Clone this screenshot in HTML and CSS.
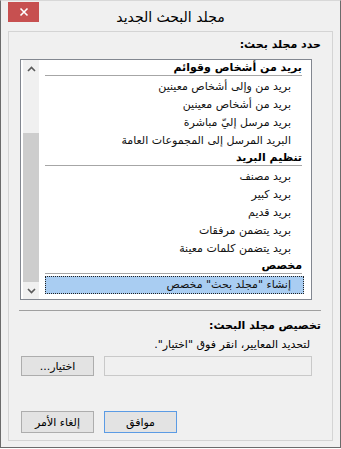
FILE: index.html
```html
<!DOCTYPE html>
<html lang="ar" dir="rtl">
<head>
    <meta charset="UTF-8">
    <meta name="viewport" content="width=device-width, initial-scale=1.0">
    <title>مجلد البحث الجديد</title>
    <link rel="stylesheet" href="styles.css">
</head>
<body>
    <div class="window">
        <div class="titlebar">
            <span></span>
            <div class="title">مجلد البحث الجديد</div>
            <button class="close" aria-label="إغلاق">
                <svg width="10" height="10" viewBox="0 0 10 10">
                    <path d="M1.5 1.5 L8.5 8.5 M8.5 1.5 L1.5 8.5" stroke="#fff" stroke-width="1.6" fill="none"/>
                </svg>
            </button>
        </div>

        <div class="panel">
            <div class="label label-top">حدد مجلد بحث:</div>

            <div class="listbox">
                <div class="list">
                    <div class="group">بريد من أشخاص وقوائم</div>
                    <div class="item">بريد من وإلى أشخاص معينين</div>
                    <div class="item">بريد من أشخاص معينين</div>
                    <div class="item">بريد مرسل إليّ مباشرة</div>
                    <div class="item">البريد المرسل إلى المجموعات العامة</div>
                    <div class="group">تنظيم البريد</div>
                    <div class="item">بريد مصنف</div>
                    <div class="item">بريد كبير</div>
                    <div class="item">بريد قديم</div>
                    <div class="item">بريد يتضمن مرفقات</div>
                    <div class="item">بريد يتضمن كلمات معينة</div>
                    <div class="group">مخصص</div>
                    <div class="item selected">إنشاء "مجلد بحث" مخصص</div>
                </div>
                <div class="scrollbar">
                    <div class="arrow">
                        <svg width="9" height="6" viewBox="0 0 9 6">
                            <polyline points="1,5 4.5,1.5 8,5" stroke="#5a5a5a" stroke-width="1.6" fill="none"/>
                        </svg>
                    </div>
                    <div class="track"><div class="thumb"></div></div>
                    <div class="arrow">
                        <svg width="9" height="6" viewBox="0 0 9 6">
                            <polyline points="1,1 4.5,4.5 8,1" stroke="#5a5a5a" stroke-width="1.6" fill="none"/>
                        </svg>
                    </div>
                </div>
            </div>

            <div class="sep"></div>

            <div class="label">تخصيص مجلد البحث:</div>
            <div class="hint">لتحديد المعايير، انقر فوق "اختيار".</div>

            <div class="field-row">
                <div class="field"></div>
                <button class="btn btn-small">اختيار...</button>
            </div>

            <div class="actions">
                <button class="btn default">موافق</button>
                <button class="btn">إلغاء الأمر</button>
            </div>
        </div>
    </div>
</body>
</html>
```

FILE: styles.css
```css
* {
    box-sizing: border-box;
}
body {
    margin: 0;
    background: #fff;
    font-family: "DejaVu Sans", sans-serif;
    font-size: 11px;
    color: #000;
}
.window {
    width: 341px;
    height: 448px;
    background: #f0f0f0;
    border: 1px solid #6b6b6b;
    border-top-color: #d8d8d8;
    display: flex;
    flex-direction: column;
}

/* title bar */
.titlebar {
    display: grid;
    grid-template-columns: 1fr auto 1fr;
    height: 30px;
}
.title {
    align-self: center;
    font-size: 14px;
    padding-top: 2px;
}
.close {
    justify-self: end;
    align-self: start;
    width: 31px;
    height: 20px;
    margin: 1px 0 0 7px;
    padding: 0;
    border: 0;
    background: #c75050;
    display: flex;
    align-items: center;
    justify-content: center;
}

/* main panel */
.panel {
    margin: 0 7px;
    border: 1px solid #d4d4d4;
    padding-bottom: 7px;
    display: flex;
    flex-direction: column;
}
.label {
    height: 16px;
    line-height: 16px;
    padding-right: 11px;
    font-weight: bold;
    margin-top: 7px;
}
.label-top {
    margin-top: 5px;
}
.hint {
    height: 16px;
    line-height: 16px;
    padding-right: 22px;
    margin-top: 3px;
}

/* list */
.listbox {
    margin: 6px 20px 0 11px;
    height: 241px;
    border: 1px solid #828790;
    background: #fff;
    display: flex;
}
.list {
    flex: 1;
    padding: 0 7px 0 6px;
}
.group {
    height: 16px;
    line-height: 15px;
    margin: 0 2px 2px 0;
    border-bottom: 1px solid #a6a6a6;
    font-weight: bold;
}
.item {
    height: 18px;
    line-height: 18px;
    padding-right: 13px;
    color: #111;
}
.item.selected {
    background: #a9cdf2;
    border: 1px dotted #222;
    line-height: 16px;
    padding-right: 12px;
}
.scrollbar {
    width: 16px;
    margin-left: 2px;
    background: #f0f0f0;
    display: flex;
    flex-direction: column;
}
.arrow {
    height: 17px;
    display: flex;
    align-items: center;
    justify-content: center;
}
.track {
    flex: 1;
    display: flex;
    flex-direction: column;
    justify-content: flex-end;
}
.thumb {
    height: 149px;
    background: #cdcdcd;
}

.sep {
    height: 1px;
    margin: 10px 11px 0 10px;
    background: #a0a0a0;
}

/* criteria row */
.field-row {
    display: flex;
    gap: 10px;
    margin: 3px 20px 0 12px;
    height: 20px;
}
.field {
    flex: 1;
    border: 1px solid #c9c9c9;
    background: #f0f0f0;
}

/* buttons */
.btn {
    width: 73px;
    height: 22px;
    padding: 0;
    border: 1px solid #adadad;
    background: #e3e3e3;
    font-family: inherit;
    font-size: 11px;
    color: #000;
}
.btn-small {
    height: 20px;
}
.btn.default {
    border-color: #5b9be4;
}
.actions {
    display: flex;
    justify-content: flex-end;
    gap: 10px;
    margin: 35px 0 0 12px;
}
```
